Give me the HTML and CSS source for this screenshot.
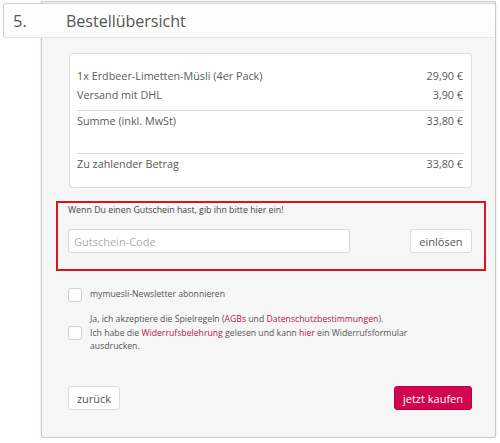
FILE: index.html
```html
<!DOCTYPE html>
<html lang="de">
<head>
<meta charset="utf-8">
<title>Bestellübersicht</title>
<link rel="stylesheet" href="styles.css">
</head>
<body>
<div class="page">
  <section class="panel">
    <header class="step-head">
      <span class="step-num">5.</span>
      <h2 class="step-title">Bestellübersicht</h2>
    </header>

    <div class="summary">
      <div class="row"><span>1x Erdbeer-Limetten-Müsli (4er Pack)</span><span>29,90 €</span></div>
      <div class="row"><span>Versand mit DHL</span><span>3,90 €</span></div>
      <div class="row sum"><span>Summe (inkl. MwSt)</span><span>33,80 €</span></div>
      <div class="row total"><span>Zu zahlender Betrag</span><span>33,80 €</span></div>
    </div>

    <div class="voucher">
      <p class="voucher-hint">Wenn Du einen Gutschein hast, gib ihn bitte hier ein!</p>
      <div class="voucher-form">
        <input class="voucher-input" type="text" placeholder="Gutschein-Code">
        <button class="btn btn-light" type="button">einlösen</button>
      </div>
    </div>

    <div class="checks">
      <label class="check">
        <span class="box"></span>
        <span class="check-text">mymuesli-Newsletter abonnieren</span>
      </label>
      <label class="check">
        <span class="box"></span>
        <span class="check-text">Ja, ich akzeptiere die Spielregeln (<a href="#">AGBs</a> und <a href="#">Datenschutzbestimmungen</a>).<br>Ich habe die <a href="#">Widerrufsbelehrung</a> gelesen und kann <a href="#">hier</a> ein Widerrufsformular<br>ausdrucken.</span>
      </label>
    </div>

    <div class="actions">
      <button class="btn btn-light" type="button">zurück</button>
      <button class="btn btn-buy" type="button">jetzt kaufen</button>
    </div>
  </section>
</div>
</body>
</html>
```

FILE: styles.css
```css
* { box-sizing: border-box; }

body {
  margin: 0;
  background: #ffffff;
  font-family: "Open Sans", "Noto Sans", sans-serif;
  color: #555555;
}

.page {
  padding: 1px 0 0 41px;
  width: 496px;
}

.panel {
  height: 437px;
  background: #f6f6f6;
  border: 1px solid #c9c9c9;
  border-radius: 0 0 3px 3px;
  box-shadow: 0 1px 2px rgba(0, 0, 0, 0.18);
  display: flex;
  flex-direction: column;
}

.step-head {
  margin: 1px 0 0 -39px;
  height: 35px;
  display: flex;
  align-items: center;
  background: linear-gradient(#ffffff, #fbfbfb);
  border: 1px solid #d0d0d0;
  border-right: none;
  border-bottom-color: #e6e6e6;
  border-radius: 3px 0 0 3px;
  padding-left: 9px;
}

.step-num {
  width: 53px;
  font-size: 16.5px;
  color: #555555;
}

.step-title {
  margin: 0;
  font-size: 16px;
  font-weight: 400;
  color: #555555;
}

.summary {
  margin: 15px 23px 0 27px;
  background: #ffffff;
  border: 1px solid #dddddd;
  border-radius: 4px;
  padding: 12px 8px 14px 7px;
  font-size: 10.8px;
  color: #5a5a5a;
}

.row {
  display: flex;
  justify-content: space-between;
  line-height: 19px;
}

.row.sum {
  margin-top: 6px;
  border-top: 1px solid #d8d8d8;
  padding-bottom: 23px;
}

.row.total {
  border-top: 1px solid #d8d8d8;
}

.voucher {
  margin: 13px 9px 0 14px;
  border: 2px solid #d9141e;
  padding: 1px 12px 16px 10px;
}

.voucher-hint {
  margin: 0;
  font-size: 8.8px;
  line-height: 12px;
  color: #444444;
}

.voucher-form {
  margin-top: 13px;
  display: flex;
  justify-content: space-between;
  align-items: center;
}

.voucher-input {
  width: 282px;
  height: 24px;
  border: 1px solid #d9d9d9;
  border-radius: 3px;
  background: #ffffff;
  padding: 0 5px;
  font-family: inherit;
  font-size: 11px;
  color: #555555;
}

.voucher-input::placeholder {
  color: #adadad;
}

.btn {
  height: 24px;
  border-radius: 3px;
  font-family: inherit;
  font-size: 11px;
  padding: 0 8px;
  white-space: nowrap;
  cursor: pointer;
}

.btn-light {
  background: #ffffff;
  border: 1px solid #dcdcdc;
  color: #555555;
}

.voucher-form .btn-light {
  width: 62px;
  padding: 0;
}

.btn-buy {
  background: #d1064f;
  border: 1px solid #c20049;
  color: #ffffff;
  width: 78px;
  padding: 0;
}

.checks {
  margin: 17px 0 0 26px;
  display: flex;
  flex-direction: column;
  gap: 11px;
}

.check {
  display: flex;
  align-items: center;
  gap: 8px;
}

.box {
  flex: none;
  width: 14px;
  height: 14px;
  background: #ffffff;
  border: 1px solid #d0d0d0;
  border-radius: 3px;
}

.check-text {
  font-size: 8.7px;
  line-height: 13.5px;
  color: #555555;
}

.check-text a {
  color: #b3194a;
  text-decoration: none;
}

.actions {
  margin: auto 23px 27px 26px;
  display: flex;
  justify-content: space-between;
}

.actions .btn-light {
  width: 52px;
  padding: 0;
}
```
